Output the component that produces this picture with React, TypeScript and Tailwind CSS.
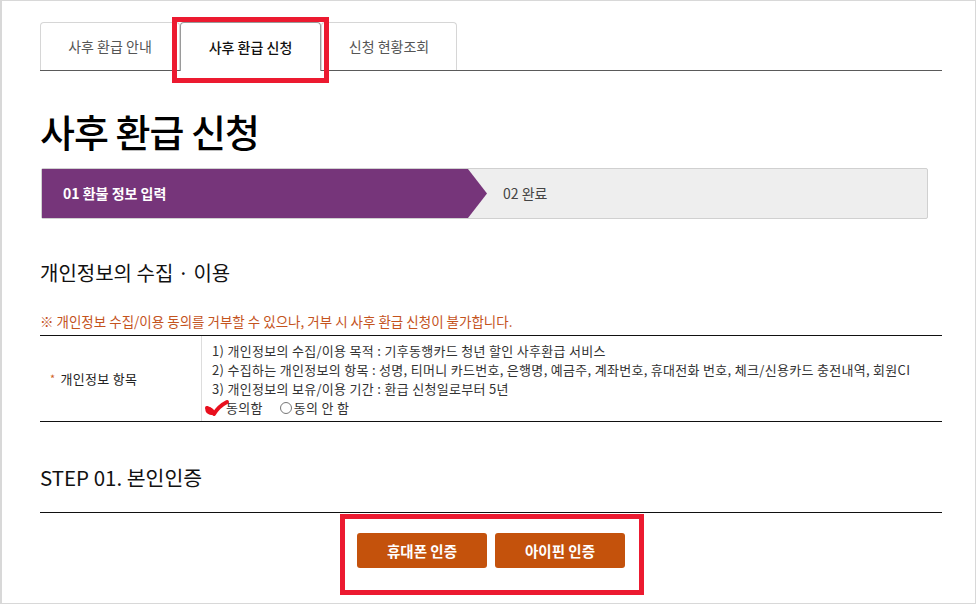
import React from 'react';

const tabs = [
  { label: '사후 환급 안내', width: 'w-[140px]', active: false },
  { label: '사후 환급 신청', width: 'w-[141px]', active: true },
  { label: '신청 현황조회', width: 'w-[136px]', active: false },
];

const consentLines = [
  '1) 개인정보의 수집/이용 목적 : 기후동행카드 청년 할인 사후환급 서비스',
  '2) 수집하는 개인정보의 항목 : 성명, 티머니 카드번호, 은행명, 예금주, 계좌번호, 휴대전화 번호, 체크/신용카드 충전내역, 회원CI',
  '3) 개인정보의 보유/이용 기간 : 환급 신청일로부터 5년',
];

const App: React.FC = () => {
  return (
    <div
      className="relative w-[976px] h-[604px] overflow-hidden bg-white border border-l-2 border-[#d8d8d8] pl-[38px] pr-[33px] pt-[21px] text-[#222]"
      style={{ fontFamily: '"Noto Sans CJK KR", "Noto Sans", sans-serif' }}
    >
      {/* Tabs */}
      <div className="flex items-end h-[49px] border-b border-[#5a5a5a]">
        {tabs.map((tab) => (
          <div
            key={tab.label}
            className={`${tab.width} h-[48px] flex items-center justify-center rounded-t-[4px] border border-b-0 text-[14px] ${
              tab.active
                ? 'border-[#9a9a9a] bg-white text-[#111] font-medium h-[49px] -mb-px'
                : 'border-[#d6d6d6] bg-white text-[#555]'
            }`}
          >
            {tab.label}
          </div>
        ))}
      </div>

      {/* Title */}
      <h1 className="mt-[36px] text-[38px] leading-[48px] font-medium tracking-[-1px] text-black">
        사후 환급 신청
      </h1>

      {/* Step bar */}
      <div className="mt-[13px] ml-px w-[887px] h-[51px] flex bg-[#eeeeee] border border-[#d0d0d0] rounded-[2px]">
        <div className="relative flex items-center w-[426px] h-full bg-[#76357a] pl-[21px] text-[14px] font-bold text-white">
          01 환불 정보 입력
          <svg className="absolute left-full top-0 h-full w-[19px]" viewBox="0 0 19 49" preserveAspectRatio="none">
            <polygon points="0,0 19,24.5 0,49" fill="#76357a" />
          </svg>
        </div>
        <div className="flex items-center pl-[35px] text-[14px] text-[#444]">02 완료</div>
      </div>

      {/* Consent */}
      <h2 className="mt-[40px] text-[20px] leading-[28px] text-[#111]">개인정보의 수집 · 이용</h2>
      <p className="mt-[25px] text-[13.5px] leading-[18px] text-[#c4531d]">
        ※ 개인정보 수집/이용 동의를 거부할 수 있으나, 거부 시 사후 환급 신청이 불가합니다.
      </p>

      <div className="mt-[5px] flex border-t border-b border-[#111] text-[13px] tracking-[0.3px]">
        <div className="w-[162px] flex items-center pl-[10px] border-r border-[#dddddd] text-[#222]">
          <span className="text-[#d0601e] mr-[5px] text-[11px]">*</span>
          개인정보 항목
        </div>
        <div className="flex-1 pl-[10px] pt-[5px] pb-[4px] text-[#333]">
          {consentLines.map((line) => (
            <div key={line} className="leading-[19px] whitespace-nowrap">
              {line}
            </div>
          ))}
          <div className="mt-[1px] flex items-center h-[18px] gap-[17px]">
            <label className="flex items-center gap-[2px]">
              <span className="w-[12px] h-[12px]" />
              동의함
            </label>
            <label className="flex items-center gap-[2px]">
              <span className="w-[12px] h-[12px] rounded-full border border-[#777] bg-white" />
              동의 안 함
            </label>
          </div>
        </div>
      </div>

      {/* Step 01 */}
      <h2 className="mt-[41px] text-[20.5px] leading-[28px] text-[#111]">STEP 01. 본인인증</h2>
      <div className="mt-[21px] border-t border-[#111]" />
      <div className="mt-[20px] flex justify-center gap-[8px]">
        <button className="w-[130px] h-[35px] rounded-[3px] bg-[#c4520c] text-white text-[14.5px] font-bold">
          휴대폰 인증
        </button>
        <button className="w-[130px] h-[35px] rounded-[3px] bg-[#c4520c] text-white text-[14.5px] font-bold">
          아이핀 인증
        </button>
      </div>

      {/* Annotation overlays */}
      <div className="absolute left-[170px] top-[16px] w-[157px] h-[66px] border-[5px] border-[#ec1a30]" />
      <div className="absolute left-[338px] top-[513px] w-[304px] h-[81px] border-[5px] border-[#ec1a30]" />
      <svg className="absolute left-[200px] top-[397px] w-[30px] h-[22px]" viewBox="0 0 30 22">
        <path
          d="M5 10 C8 11 10 13 12 16 C15 11 19 7 25 4"
          fill="none"
          stroke="#e8101e"
          strokeWidth="4"
          strokeLinecap="round"
          strokeLinejoin="round"
        />
        <ellipse cx="8" cy="13" rx="5" ry="3.5" fill="#e8101e" transform="rotate(30 8 13)" />
      </svg>
    </div>
  );
};

export default App;
